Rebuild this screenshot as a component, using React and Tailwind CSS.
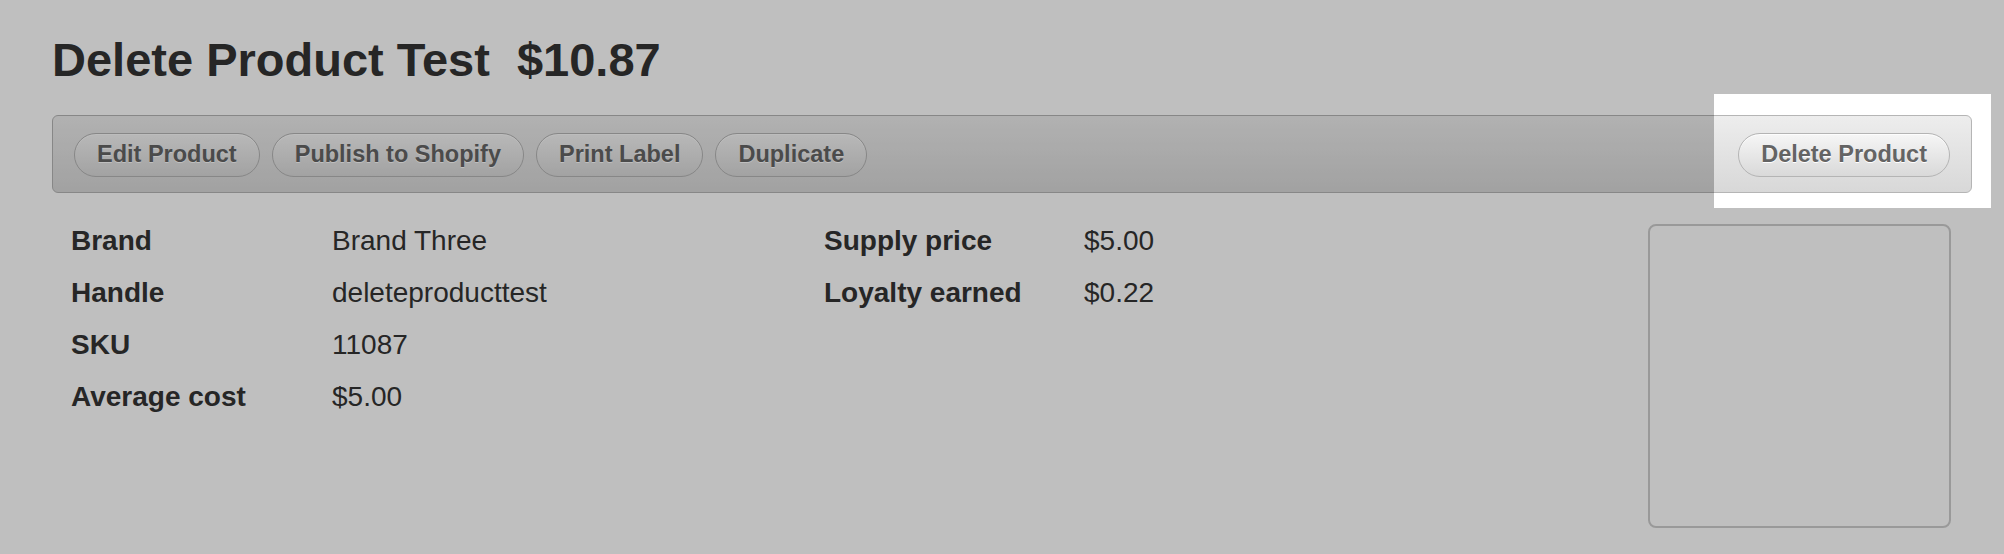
import React from "react";

const btn =
  "h-[44px] px-[22px] rounded-full border border-[#b4b4b4] bg-gradient-to-b from-[#f6f6f6] to-[#d9d9d9] text-[23.5px] font-bold text-[#646464] leading-none [text-shadow:0_1px_0_#fff] shadow-[inset_0_1px_0_rgba(255,255,255,0.8)] whitespace-nowrap";

function Row({ label, value, labelW }) {
  return (
    <div className="flex h-[52px] items-center leading-[52px]">
      <div className={`${labelW} font-bold`}>{label}</div>
      <div>{value}</div>
    </div>
  );
}

export default function App() {
  return (
    <div
      className="relative w-[2004px] h-[554px] overflow-hidden bg-white text-[#333]"
      style={{ fontFamily: '"Liberation Sans", Arial, sans-serif' }}
    >
      <div className="pl-[52px] pr-[32px]">
        <h1 className="mt-[32px] h-[56px] text-[47px] leading-[56px] font-bold text-[#333] whitespace-nowrap">
          Delete Product Test<span className="ml-[27px]">$10.87</span>
        </h1>

        <div className="mt-[27px] flex items-center justify-between rounded-[6px] border border-[#b5b5b5] bg-gradient-to-b from-[#ededed] to-[#d8d8d8] pl-[21px] pr-[21px] pt-[17px] pb-[15px]">
          <div className="flex gap-[12px]">
            <button className={btn}>Edit Product</button>
            <button className={btn}>Publish to Shopify</button>
            <button className={btn}>Print Label</button>
            <button className={btn}>Duplicate</button>
          </div>
          <button className={btn}>Delete Product</button>
        </div>

        <div className="mt-[22px] flex text-[28px] text-[#333]">
          <div className="w-[772px] pl-[19px]">
            <Row label="Brand" value="Brand Three" labelW="w-[261px]" />
            <Row label="Handle" value="deleteproducttest" labelW="w-[261px]" />
            <Row label="SKU" value="11087" labelW="w-[261px]" />
            <Row label="Average cost" value="$5.00" labelW="w-[261px]" />
          </div>
          <div className="flex-1">
            <Row label="Supply price" value="$5.00" labelW="w-[260px]" />
            <Row label="Loyalty earned" value="$0.22" labelW="w-[260px]" />
          </div>
          <div className="mt-[9px] mr-[21px] h-[304px] w-[303px] rounded-[8px] border-2 border-[#cdcdcd]" />
        </div>
      </div>

      {/* spotlight overlay */}
      <div className="pointer-events-none absolute left-[1714px] top-[94px] h-[114px] w-[277px] shadow-[0_0_0_4000px_rgba(0,0,0,0.25)]" />
    </div>
  );
}
